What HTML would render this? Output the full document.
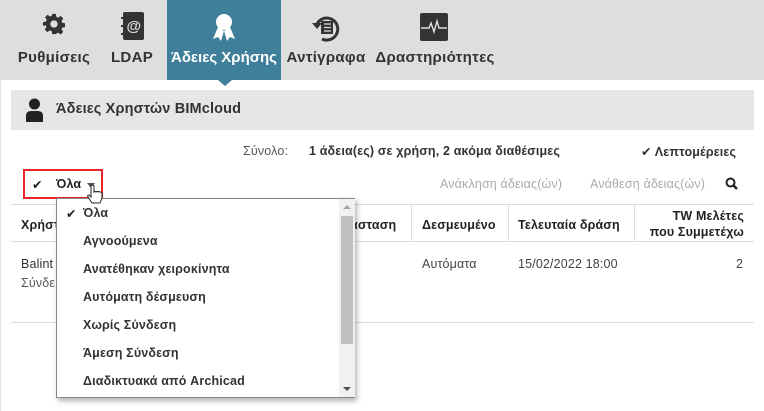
<!DOCTYPE html>
<html><head><meta charset="utf-8"><style>
*{margin:0;padding:0;box-sizing:border-box}
body{width:764px;height:411px;overflow:hidden;background:#fff;font-family:"Liberation Sans","DejaVu Sans",sans-serif;color:#222;position:relative;font-size:12.5px;letter-spacing:0.15px}
.a{position:absolute;white-space:nowrap}
.nav{position:absolute;left:0;top:0;width:764px;height:80px;background:#dedede}
.tab{position:absolute;top:0;height:80px;text-align:center;font-weight:bold;font-size:15px;color:#333;letter-spacing:0.3px}
.tab .l{position:absolute;top:49px;left:-10px;right:-10px}
.b{font-weight:bold}
.g{color:#aaa}
.hl{position:absolute;height:1px;background:#ddd}
.vl{position:absolute;width:1px;background:#ddd}
.dd{position:absolute;left:56px;top:198px;width:299px;height:200px;background:#fff;border:1px solid #888;box-shadow:2px 3px 5px rgba(0,0,0,.3)}
.it{position:absolute;left:26px;font-weight:bold;font-size:12.5px;color:#333}
</style></head><body>
<div class="nav"></div>
<div class="tab" style="left:14px;width:80px">
<svg class="a" style="left:29px;top:13px" width="22" height="22" viewBox="0 0 24 24"><path fill="#333" d="M10 1h4l.6 3.2 2 .9 2.7-1.9 2.8 2.8-1.9 2.7.9 2 3.2.6v4l-3.2.6-.9 2 1.9 2.7-2.8 2.8-2.7-1.9-2 .9L14 23h-4l-.6-3.2-2-.9-2.7 1.9-2.8-2.8 1.9-2.7-.9-2L0 14v-4l3.2-.6.9-2L2.2 4.7 5 1.9l2.7 1.9 2-.9z"/><circle cx="12" cy="12" r="4" fill="#dedede"/></svg>
<div class="l">Ρυθμίσεις</div></div>
<div class="tab" style="left:106px;width:52px">
<svg class="a" style="left:13px;top:11px" width="26" height="30" viewBox="0 0 26 30"><rect x="4" y="1" width="21" height="28" rx="2" fill="#333"/><rect x="2" y="6" width="4" height="2" fill="#333"/><rect x="2" y="14" width="4" height="2" fill="#333"/><rect x="2" y="22" width="4" height="2" fill="#333"/><text x="15" y="20" font-size="15" font-weight="bold" fill="#ddd" text-anchor="middle" font-family="Liberation Sans">@</text></svg>
<div class="l">LDAP</div></div>
<div class="tab" style="left:167px;width:114px;background:#3f7f9a;color:#fff">
<svg class="a" style="left:45px;top:13px" width="24" height="30" viewBox="0 0 24 30"><circle cx="12" cy="9" r="8" fill="#fff"/><path fill="#fff" d="M6 14L1 26l5-2 3 4 3-10zM18 14l5 12-5-2-3 4-3-10z"/></svg>
<div class="l" style="letter-spacing:0">Άδειες Χρήσης</div></div>
<div class="a" style="left:218px;top:80px;width:0;height:0;border-left:7px solid transparent;border-right:7px solid transparent;border-top:6px solid #3f7f9a"></div>
<div class="tab" style="left:286px;width:80px">
<svg class="a" style="left:24px;top:12px" width="32" height="32" viewBox="0 0 32 32"><path d="M7 12A11 11 0 1 1 12 27" fill="none" stroke="#333" stroke-width="3"/><path d="M2 11h10l-5 6z" fill="#333"/><rect x="11" y="9" width="12" height="13" fill="#333"/><path d="M14 12h7M14 15.5h7M14 19h7" stroke="#ddd" stroke-width="1.3"/></svg>
<div class="l">Αντίγραφα</div></div>
<div class="tab" style="left:376px;width:118px">
<svg class="a" style="left:44px;top:13px" width="28" height="28" viewBox="0 0 28 28"><rect width="28" height="28" rx="2" fill="#333"/><path d="M1 15h8l2-5 3 9 3-11 2 7h8" fill="none" stroke="#ddd" stroke-width="1.4"/></svg>
<div class="l">Δραστηριότητες</div></div>

<div class="a" style="left:0;top:80px;width:1px;height:331px;background:#e4e4e4"></div>
<div class="a" style="left:11px;top:90px;width:743px;height:40px;background:#e6e6e6"></div>
<svg class="a" style="left:26px;top:98px" width="17" height="24" viewBox="0 0 17 24"><circle cx="8.5" cy="6" r="5.5" fill="#222"/><path d="M0 24v-6q0-5 5-5h7q5 0 5 5v6z" fill="#222"/></svg>
<div class="a" style="left:56px;top:101px;font-size:14.5px;font-weight:bold;color:#333">Άδειες Χρηστών BIMcloud</div>

<div class="a" style="left:243px;top:144px;color:#555">Σύνολο:</div>
<div class="a b" style="left:309px;top:144px;color:#333">1 άδεια(ες) σε χρήση, 2 ακόμα διαθέσιμες</div>
<div class="a b" style="left:641px;top:144px;color:#333">✔ Λεπτομέρειες</div>

<div class="a" style="left:23px;top:169px;width:80px;height:30px;border:2px solid #e8262a"></div>
<div class="a b" style="left:32px;top:177px">✔</div>
<div class="a b" style="left:56px;top:177px">Όλα</div>
<div class="a" style="left:87px;top:183px;border-left:4px solid transparent;border-right:4px solid transparent;border-top:5px solid #555"></div>
<div class="a g" style="left:440px;top:177px">Ανάκληση άδειας(ών)</div>
<div class="a g" style="left:590px;top:177px">Ανάθεση άδειας(ών)</div>
<svg class="a" style="left:725px;top:177px" width="13" height="13" viewBox="0 0 13 13"><circle cx="5.5" cy="5.5" r="4" fill="none" stroke="#222" stroke-width="2"/><path d="M8.5 8.5L12 12" stroke="#222" stroke-width="2.5"/></svg>

<div class="hl" style="left:11px;top:204px;width:743px"></div>
<div class="hl" style="left:11px;top:241px;width:743px"></div>
<div class="hl" style="left:11px;top:322px;width:743px"></div>
<div class="vl" style="left:411px;top:204px;height:37px"></div>
<div class="vl" style="left:508px;top:204px;height:37px"></div>
<div class="vl" style="left:634px;top:204px;height:37px"></div>
<div class="a b" style="left:21px;top:218px">Χρήστ</div>
<div class="a b" style="left:350px;top:218px">άσταση</div>
<div class="a b" style="left:422px;top:218px">Δεσμευμένο</div>
<div class="a b" style="left:518px;top:218px">Τελευταία δράση</div>
<div class="a b" style="left:600px;top:208px;width:144px;text-align:right;line-height:16px">TW Μελέτες<br>που Συμμετέχω</div>
<div class="a" style="left:21px;top:257px;color:#333">Balint</div>
<div class="a" style="left:21px;top:276px;color:#555">Σύνδε</div>
<div class="a" style="left:422px;top:257px;color:#444">Αυτόματα</div>
<div class="a" style="left:518px;top:257px;color:#444">15/02/2022 18:00</div>
<div class="a" style="left:736px;top:257px;color:#444">2</div>

<div class="dd">
<div class="a b" style="left:9px;top:7px">✔</div>
<div class="it" style="top:7px">Όλα</div>
<div class="it" style="top:35px">Αγνοούμενα</div>
<div class="it" style="top:63px">Ανατέθηκαν χειροκίνητα</div>
<div class="it" style="top:91px">Αυτόματη δέσμευση</div>
<div class="it" style="top:119px">Χωρίς Σύνδεση</div>
<div class="it" style="top:147px">Άμεση Σύνδεση</div>
<div class="it" style="top:175px">Διαδικτυακά από Archicad</div>
<div class="a" style="left:282px;top:0;width:16px;height:198px;background:#f1f1f1"></div>
<div class="a" style="left:284px;top:17px;width:12px;height:128px;background:#c1c1c1"></div>
<div class="a" style="left:286px;top:6px;border-left:4px solid transparent;border-right:4px solid transparent;border-bottom:4px solid #a3a3a3"></div>
<div class="a" style="left:286px;top:188px;border-left:4px solid transparent;border-right:4px solid transparent;border-top:4px solid #505050"></div>
</div>
<svg class="a" style="left:86px;top:184px" width="18" height="22" viewBox="0 0 18 22"><path d="M5 2v11l-2-2q-2 0-1 2l4 6h8l2-5v-4q0-2-2-2-1-1-2 0-1-1-2 0-1-1-2 0V2q-1-2-3 0z" fill="#fff" stroke="#222" stroke-width="1"/></svg>
</body></html>
